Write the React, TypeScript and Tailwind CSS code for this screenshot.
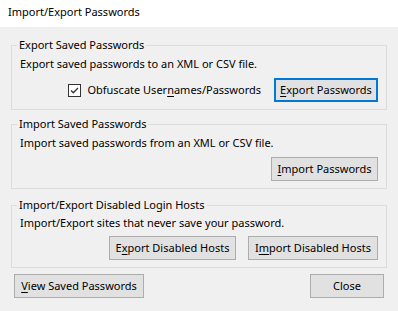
import React from "react";

function Btn({
  children,
  w,
  focused = false,
}: {
  children: React.ReactNode;
  w: string;
  focused?: boolean;
}) {
  return (
    <div
      className={
        "h-[24px] flex items-center justify-center bg-[#e1e1e1] " +
        w +
        (focused ? " border-2 border-[#0078d7]" : " border border-[#adadad]")
      }
    >
      <span>{children}</span>
    </div>
  );
}

function Mn({ children }: { children: React.ReactNode }) {
  return <span className="underline underline-offset-[2px] decoration-[1px]">{children}</span>;
}

export default function App() {
  return (
    <div className="w-[398px] h-[311px] bg-[#f0f0f0] flex flex-col text-black text-[11px] leading-[16px] font-['Noto_Sans',sans-serif]">
      <div className="h-[27px] bg-white pl-[8px] pt-[4px] shrink-0">Import/Export Passwords</div>

      <div className="px-[11px] pt-[10px] flex flex-col">
        <fieldset className="border border-[#dcdcdc] px-[8px] pb-[7px]">
          <legend className="ml-[-3px] px-[2px]">Export Saved Passwords</legend>
          <div className="mt-[3px]">Export saved passwords to an XML or CSV file.</div>
          <div className="mt-[6px] flex justify-end items-center">
            <div className="w-[13px] h-[13px] border border-[#333333] bg-white flex items-center justify-center">
              <svg width="11" height="11" viewBox="0 0 11 11">
                <path d="M2 5.5 L4.3 7.8 L9 3" fill="none" stroke="#333" strokeWidth="1.3" />
              </svg>
            </div>
            <span className="ml-[6px]">
              Obfuscate User<Mn>n</Mn>ames/Passwords
            </span>
            <div className="ml-[13px]">
              <Btn w="w-[104px]" focused>
                <Mn>E</Mn>xport Passwords
              </Btn>
            </div>
          </div>
        </fieldset>

        <fieldset className="mt-[6px] border border-[#dcdcdc] px-[8px] pb-[7px]">
          <legend className="ml-[-3px] px-[2px]">Import Saved Passwords</legend>
          <div className="mt-[3px]">Import saved passwords from an XML or CSV file.</div>
          <div className="mt-[6px] flex justify-end">
            <Btn w="w-[107px]">
              <Mn>I</Mn>mport Passwords
            </Btn>
          </div>
        </fieldset>

        <fieldset className="mt-[8px] border border-[#dcdcdc] px-[8px] pb-[7px]">
          <legend className="ml-[-3px] px-[2px]">Import/Export Disabled Login Hosts</legend>
          <div className="mt-[2px]">Import/Export sites that never save your password.</div>
          <div className="mt-[5px] flex justify-end gap-[12px]">
            <Btn w="w-[127px]">
              E<Mn>x</Mn>port Disabled Hosts
            </Btn>
            <Btn w="w-[130px]">
              I<Mn>m</Mn>port Disabled Hosts
            </Btn>
          </div>
        </fieldset>
      </div>

      <div className="mt-[6px] px-[14px] flex justify-between">
        <Btn w="w-[130px]">
          <Mn>V</Mn>iew Saved Passwords
        </Btn>
        <Btn w="w-[74px]">Close</Btn>
      </div>
    </div>
  );
}
